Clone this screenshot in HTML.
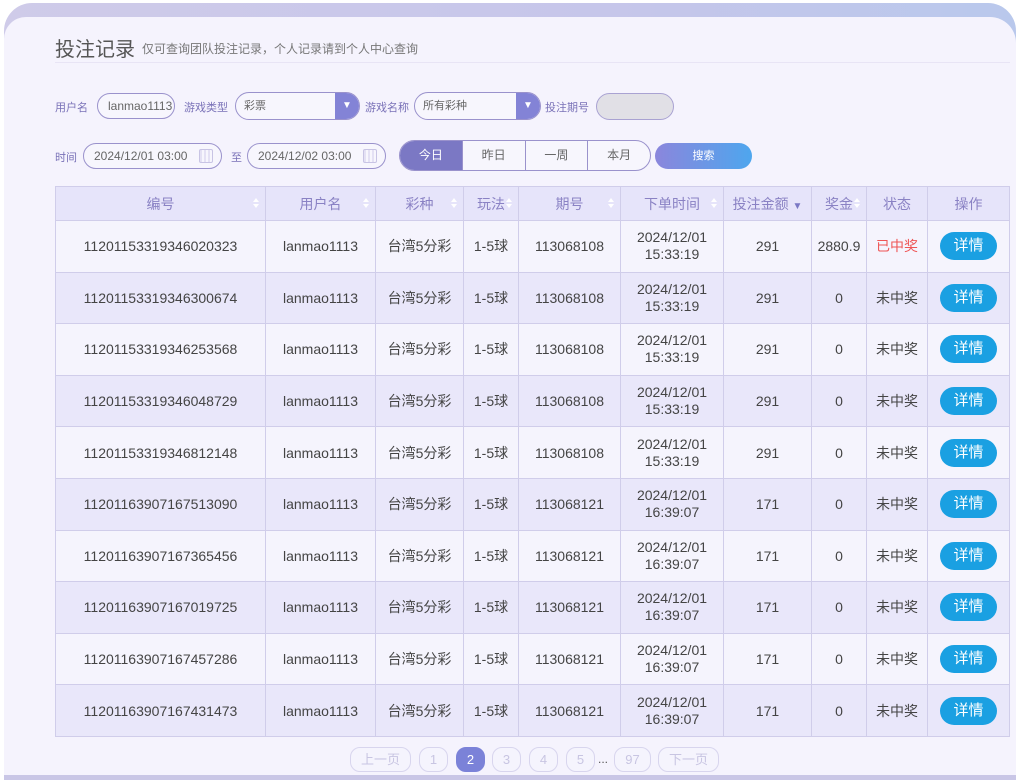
<!DOCTYPE html>
<html><head><meta charset="utf-8"><style>
*{margin:0;padding:0;box-sizing:border-box}
body{width:1024px;height:783px;background:#fff;font-family:"Liberation Sans","Noto Sans CJK SC",sans-serif;position:relative;overflow:hidden}
.card{position:absolute;left:4px;top:3px;width:1012px;height:777px;border-radius:28px 28px 0 0;background:linear-gradient(90deg,#cfcbe9,#c6c6ea 60%,#b9c8ec);overflow:hidden}
.inner{position:absolute;left:0;top:14px;right:0;bottom:4px;background:#f5f3fd;border-radius:22px 26px 0 0}
.bottom{position:absolute;left:0;right:0;bottom:0;height:5px;background:#c9c6e6}
.abs{position:absolute}
.title{left:55px;top:33px;font-size:20px;color:#555}
.sub{left:142px;top:40px;font-size:12px;color:#777}
.hr{left:55px;top:62px;width:955px;height:1px;background:#e8e4f5}
.lbl{font-size:11px;color:#7a72b8}
.pill{border:1px solid #9a92cc;border-radius:14px;background:#f7f6fd;font-size:12px;color:#666;padding-left:10px;line-height:24px;height:26px}
.sel{border:1px solid #9a92cc;border-radius:14px;background:#f7f6fd;height:28px;font-size:11px;color:#666;line-height:26px;padding-left:8px;overflow:hidden}
.sel .ar{position:absolute;right:0;top:0;width:24px;height:100%;background:#8383d6;color:#fff;text-align:center;font-size:10px;line-height:26px}
.cal{position:absolute;right:8px;top:5px;width:14px;height:14px;border:1px solid #c8c4e4;border-radius:2px;background:repeating-linear-gradient(90deg,#e4e1f4 0 2px,transparent 2px 4px)}
.seg{left:399px;top:140px;width:252px;height:31px;border:1px solid #9a92cc;border-radius:16px;overflow:hidden;display:flex;background:#f7f6fd}
.seg div{flex:1;text-align:center;line-height:29px;font-size:12px;color:#666;border-left:1px solid #9a92cc}
.seg div:first-child{border-left:none;background:#7b78c4;color:#fff}
.search{left:655px;top:143px;width:97px;height:26px;border-radius:13px;background:linear-gradient(90deg,#8b86dc,#4ea6ee);color:#fff;font-size:11px;text-align:center;line-height:26px}
table{position:absolute;left:55px;top:186px;border-collapse:collapse;font-size:14px;color:#444}
td,th{border:1px solid #d0cdea;text-align:center;height:51.6px;padding:0}
th{height:34px;background:#e6e4fa;color:#8a82c4;font-weight:normal;font-size:14px;position:relative}
tr:nth-child(odd) td{background:#e9e7fa}
tr:nth-child(even) td{background:#f5f4fd}
.srt{position:absolute;right:6px;top:11px;width:6px;height:12px}
.srt:before{content:"";position:absolute;left:0;top:0;border:3px solid transparent;border-bottom:4px solid #fff;border-top:0}
.srt:after{content:"";position:absolute;left:0;top:6px;border:3px solid transparent;border-top:4px solid #fff;border-bottom:0}
.btn{display:inline-block;width:57px;height:28px;border-radius:14px;background:#1aa0e2;color:#fff;line-height:28px;font-size:15px}
.tm{line-height:17px;font-size:14px}
.red{color:#e55}
.pg{top:747px;height:25px;border:1px solid #d8d5ee;border-radius:10px;font-size:13px;color:#c8c5e2;text-align:center;line-height:23px;background:#f5f4fd}
</style></head><body>
<div class="card"><div class="inner"></div><div class="bottom"></div></div>
<div class="abs title">投注记录</div>
<div class="abs sub">仅可查询团队投注记录，个人记录请到个人中心查询</div>
<div class="abs hr"></div>

<div class="abs lbl" style="left:55px;top:99px">用户名</div>
<div class="abs pill" style="left:97px;top:93px;width:78px;overflow:hidden">lanmao1113</div>
<div class="abs lbl" style="left:184px;top:99px">游戏类型</div>
<div class="abs sel" style="left:235px;top:92px;width:125px">彩票<div class="ar">▼</div></div>
<div class="abs lbl" style="left:365px;top:99px">游戏名称</div>
<div class="abs sel" style="left:414px;top:92px;width:127px">所有彩种<div class="ar">▼</div></div>
<div class="abs lbl" style="left:545px;top:99px">投注期号</div>
<div class="abs" style="left:596px;top:93px;width:78px;height:27px;border:1px solid #a9a2d2;border-radius:14px;background:#e1e0e6"></div>

<div class="abs lbl" style="left:55px;top:149px">时间</div>
<div class="abs pill" style="left:83px;top:143px;width:139px">2024/12/01 03:00<div class="cal"></div></div>
<div class="abs lbl" style="left:231px;top:149px">至</div>
<div class="abs pill" style="left:247px;top:143px;width:139px">2024/12/02 03:00<div class="cal"></div></div>
<div class="abs seg"><div>今日</div><div>昨日</div><div>一周</div><div>本月</div></div>
<div class="abs search">搜索</div>

<table>
<colgroup><col style="width:210px"><col style="width:110px"><col style="width:88px"><col style="width:55px"><col style="width:102px"><col style="width:103px"><col style="width:88px"><col style="width:55px"><col style="width:61px"><col style="width:82px"></colgroup>
<tr><th>编号<span class="srt"></span></th><th>用户名<span class="srt"></span></th><th>彩种<span class="srt"></span></th><th>玩法<span class="srt"></span></th><th>期号<span class="srt"></span></th><th>下单时间<span class="srt"></span></th><th>投注金额 <span style="font-size:10px;color:#7b78c4">▼</span></th><th>奖金<span class="srt"></span></th><th>状态</th><th>操作</th></tr>
<tr><td>11201153319346020323</td><td>lanmao1113</td><td>台湾5分彩</td><td>1-5球</td><td>113068108</td><td class="tm">2024/12/01<br>15:33:19</td><td>291</td><td>2880.9</td><td class="red">已中奖</td><td><span class="btn">详情</span></td></tr>
<tr><td>11201153319346300674</td><td>lanmao1113</td><td>台湾5分彩</td><td>1-5球</td><td>113068108</td><td class="tm">2024/12/01<br>15:33:19</td><td>291</td><td>0</td><td>未中奖</td><td><span class="btn">详情</span></td></tr>
<tr><td>11201153319346253568</td><td>lanmao1113</td><td>台湾5分彩</td><td>1-5球</td><td>113068108</td><td class="tm">2024/12/01<br>15:33:19</td><td>291</td><td>0</td><td>未中奖</td><td><span class="btn">详情</span></td></tr>
<tr><td>11201153319346048729</td><td>lanmao1113</td><td>台湾5分彩</td><td>1-5球</td><td>113068108</td><td class="tm">2024/12/01<br>15:33:19</td><td>291</td><td>0</td><td>未中奖</td><td><span class="btn">详情</span></td></tr>
<tr><td>11201153319346812148</td><td>lanmao1113</td><td>台湾5分彩</td><td>1-5球</td><td>113068108</td><td class="tm">2024/12/01<br>15:33:19</td><td>291</td><td>0</td><td>未中奖</td><td><span class="btn">详情</span></td></tr>
<tr><td>11201163907167513090</td><td>lanmao1113</td><td>台湾5分彩</td><td>1-5球</td><td>113068121</td><td class="tm">2024/12/01<br>16:39:07</td><td>171</td><td>0</td><td>未中奖</td><td><span class="btn">详情</span></td></tr>
<tr><td>11201163907167365456</td><td>lanmao1113</td><td>台湾5分彩</td><td>1-5球</td><td>113068121</td><td class="tm">2024/12/01<br>16:39:07</td><td>171</td><td>0</td><td>未中奖</td><td><span class="btn">详情</span></td></tr>
<tr><td>11201163907167019725</td><td>lanmao1113</td><td>台湾5分彩</td><td>1-5球</td><td>113068121</td><td class="tm">2024/12/01<br>16:39:07</td><td>171</td><td>0</td><td>未中奖</td><td><span class="btn">详情</span></td></tr>
<tr><td>11201163907167457286</td><td>lanmao1113</td><td>台湾5分彩</td><td>1-5球</td><td>113068121</td><td class="tm">2024/12/01<br>16:39:07</td><td>171</td><td>0</td><td>未中奖</td><td><span class="btn">详情</span></td></tr>
<tr><td>11201163907167431473</td><td>lanmao1113</td><td>台湾5分彩</td><td>1-5球</td><td>113068121</td><td class="tm">2024/12/01<br>16:39:07</td><td>171</td><td>0</td><td>未中奖</td><td><span class="btn">详情</span></td></tr>
</table>

<div class="abs pg" style="left:350px;width:61px">上一页</div>
<div class="abs pg" style="left:419px;width:29px">1</div>
<div class="abs pg" style="left:456px;width:29px;background:#7b82d8;color:#fff;border-color:#7b82d8">2</div>
<div class="abs pg" style="left:492px;width:29px">3</div>
<div class="abs pg" style="left:529px;width:29px">4</div>
<div class="abs pg" style="left:566px;width:29px">5</div>
<div class="abs" style="left:598px;top:752px;font-size:12px;color:#555">...</div>
<div class="abs pg" style="left:614px;width:37px">97</div>
<div class="abs pg" style="left:658px;width:61px">下一页</div>
</body></html>
